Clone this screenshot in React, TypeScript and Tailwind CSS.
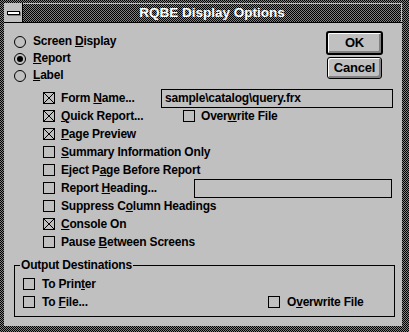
import React from "react";

const Check: React.FC<{ checked?: boolean }> = ({ checked }) => (
  <span className="w-[12px] h-[12px] border border-black shrink-0 flex">
    {checked && (
      <svg width="10" height="10" viewBox="0 0 10 10" shapeRendering="crispEdges">
        <line x1="0" y1="0" x2="10" y2="10" stroke="#000" strokeWidth="1" />
        <line x1="10" y1="0" x2="0" y2="10" stroke="#000" strokeWidth="1" />
      </svg>
    )}
  </span>
);

const Radio: React.FC<{ checked?: boolean }> = ({ checked }) => (
  <span className="w-[12px] h-[12px] rounded-full border border-black shrink-0 flex items-center justify-center">
    {checked && <span className="w-[6px] h-[6px] rounded-full bg-black" />}
  </span>
);

const Btn: React.FC<{ label: string; isDefault?: boolean }> = ({ label, isDefault }) => (
  <button
    className={
      isDefault
        ? "w-[57px] h-[24px] border-2 border-black rounded-[3px] bg-[#c0c0c0] shadow-[inset_1px_1px_0_#fff,inset_-2px_-2px_0_#808080] text-[13px] font-bold"
        : "w-[55px] h-[22px] border border-black rounded-[3px] bg-[#c0c0c0] shadow-[inset_1px_1px_0_#fff,inset_-2px_-2px_0_#808080] text-[13px] font-bold"
    }
  >
    {label}
  </button>
);

export default function App() {
  const radios = [
    { pre: "Screen ", key: "D", post: "isplay", checked: false },
    { pre: "", key: "R", post: "eport", checked: true },
    { pre: "", key: "L", post: "abel", checked: false },
  ];

  return (
    <div className="w-[409px] h-[332px] bg-[repeating-conic-gradient(#808080_0%_25%,#000_0%_50%)] bg-[length:2px_2px] pt-[3px] pl-[4px] pr-[7px] pb-[6px] flex flex-col font-['Liberation_Sans',Arial,sans-serif] text-[12px] font-bold tracking-[-0.2px] text-black">
      {/* title bar */}
      <div className="h-[20px] flex border-b border-black shrink-0">
        <div className="w-[19px] bg-[#c0c0c0] border-r border-black flex items-center justify-center">
          <span className="w-[13px] h-[4px] bg-white border border-black shadow-[1px_1px_0_#808080]" />
        </div>
        <div className="flex-1 flex items-center justify-center border-t border-r border-[#c0c0c0] text-white text-[13.5px] tracking-normal">
          RQBE Display Options
        </div>
      </div>

      {/* client */}
      <div className="flex-1 bg-[#c0c0c0] flex flex-col">
        <div className="flex justify-between">
          <div className="pt-[10px] pl-[10px] flex flex-col">
            {radios.map((r) => (
              <div key={r.key} className="h-[17px] leading-[17px] flex items-center gap-[7px]">
                <Radio checked={r.checked} />
                <span>
                  {r.pre}
                  <u>{r.key}</u>
                  {r.post}
                </span>
              </div>
            ))}
          </div>
          <div className="pt-[8px] pr-[19px] flex flex-col items-center gap-[2px]">
            <Btn label="OK" isDefault />
            <Btn label="Cancel" />
          </div>
        </div>

        <div className="mt-[5px] pl-[39px] flex flex-col">
          <div className="h-[18px] leading-[18px] flex items-center gap-[6px]">
            <Check checked />
            <span className="w-[94px]">
              Form <u>N</u>ame...
            </span>
            <div className="w-[232px] h-[19px] border border-black pl-[3px] leading-[17px]">
              sample\catalog\query.frx
            </div>
          </div>
          <div className="h-[18px] leading-[18px] flex items-center gap-[6px]">
            <Check checked />
            <span className="w-[116px]">
              <u>Q</u>uick Report...
            </span>
            <Check />
            <span>
              Over<u>w</u>rite File
            </span>
          </div>
          <div className="h-[18px] leading-[18px] flex items-center gap-[6px]">
            <Check checked />
            <span>
              <u>P</u>age Preview
            </span>
          </div>
          <div className="h-[18px] leading-[18px] flex items-center gap-[6px]">
            <Check />
            <span>
              <u>S</u>ummary Information Only
            </span>
          </div>
          <div className="h-[18px] leading-[18px] flex items-center gap-[6px]">
            <Check />
            <span>
              Eject P<u>a</u>ge Before Report
            </span>
          </div>
          <div className="h-[18px] leading-[18px] flex items-center gap-[6px]">
            <Check />
            <span className="w-[127px]">
              Report <u>H</u>eading...
            </span>
            <div className="w-[198px] h-[19px] border border-black" />
          </div>
          <div className="h-[18px] leading-[18px] flex items-center gap-[6px]">
            <Check />
            <span>
              Suppress C<u>o</u>lumn Headings
            </span>
          </div>
          <div className="h-[18px] leading-[18px] flex items-center gap-[6px]">
            <Check checked />
            <span>
              <u>C</u>onsole On
            </span>
          </div>
          <div className="h-[18px] leading-[18px] flex items-center gap-[6px]">
            <Check />
            <span>
              Pause <u>B</u>etween Screens
            </span>
          </div>
        </div>

        <div className="mt-[14px] ml-[10px] w-[381px] h-[52px] border border-black relative pt-[9px] pl-[8px] flex flex-col">
          <span className="absolute left-[5px] top-[-9px] px-[1px] bg-[#c0c0c0] leading-[16px]">
            Output Destinations
          </span>
          <div className="h-[18px] leading-[18px] flex items-center gap-[7px]">
            <Check />
            <span>
              To Prin<u>t</u>er
            </span>
          </div>
          <div className="h-[18px] leading-[18px] flex items-center">
            <div className="w-[245px] flex items-center gap-[7px]">
              <Check />
              <span>
                To <u>F</u>ile...
              </span>
            </div>
            <div className="flex items-center gap-[7px]">
              <Check />
              <span>
                O<u>v</u>erwrite File
              </span>
            </div>
          </div>
        </div>
      </div>
    </div>
  );
}
